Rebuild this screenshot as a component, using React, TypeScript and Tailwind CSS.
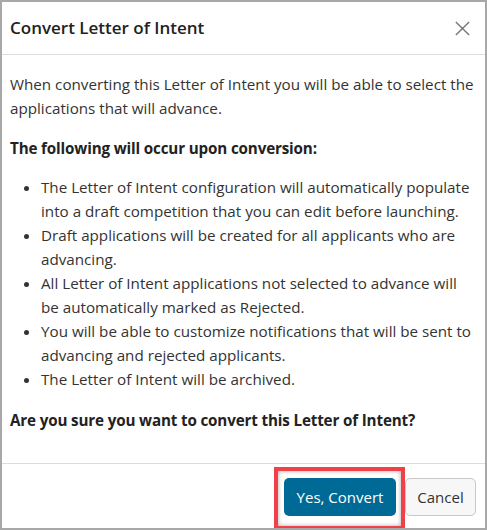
import React from 'react';

const bullets = [
  'The Letter of Intent configuration will automatically populate into a draft competition that you can edit before launching.',
  'Draft applications will be created for all applicants who are advancing.',
  'All Letter of Intent applications not selected to advance will be automatically marked as Rejected.',
  'You will be able to customize notifications that will be sent to advancing and rejected applicants.',
  'The Letter of Intent will be archived.',
];

export default function App() {
  return (
    <div
      className="w-[487px] h-[530px] bg-white border-2 border-[#a8a8a8] flex flex-col text-[#333] overflow-hidden"
      style={{ fontFamily: '"Segoe UI", "Open Sans", sans-serif' }}
    >
      {/* header */}
      <div className="h-[53px] shrink-0 flex items-center justify-between pl-2 pr-2.5 border-b border-[#dcdcdc]">
        <h2 className="text-[17px] font-semibold text-[#222]">Convert Letter of Intent</h2>
        <button className="text-[#777] p-1">
          <svg width="17" height="17" viewBox="0 0 18 18" fill="none" stroke="currentColor" strokeWidth="1.5">
            <path d="M2 2l14 14M16 2L2 16" />
          </svg>
        </button>
      </div>

      {/* body */}
      <div className="flex-1 pl-2 pr-[9px] pt-[17px] text-[15.2px] leading-6">
        <p>When converting this Letter of Intent you will be able to select the applications that will advance.</p>
        <p className="mt-4 font-bold text-[#222] tracking-[-0.15px]">The following will occur upon conversion:</p>
        <ul className="mt-[15px] list-disc pl-[31px]">
          {bullets.map((b) => (
            <li key={b}>{b}</li>
          ))}
        </ul>
        <p className="mt-[17px] font-bold text-[#222] tracking-[-0.15px]">Are you sure you want to convert this Letter of Intent?</p>
      </div>

      {/* footer */}
      <div className="h-[65px] shrink-0 border-t border-[#dcdcdc] flex items-start justify-end gap-[9px] pt-[14px] pr-[9px]">
        <div className="relative">
          <div className="absolute -left-[10px] -right-[9px] -top-[11px] -bottom-[14px] border-4 border-[#f04148] shadow-[inset_0_0_4px_rgba(0,0,0,0.35)]" />
          <button className="relative h-[38px] w-[112px] rounded-[5px] bg-[#006a96] text-white text-[15px]">
            Yes, Convert
          </button>
        </div>
        <button className="h-[38px] w-[71px] rounded-[5px] border border-[#c8c8c8] bg-[#f7f7f7] text-[15px] text-[#333]">
          Cancel
        </button>
      </div>
    </div>
  );
}
